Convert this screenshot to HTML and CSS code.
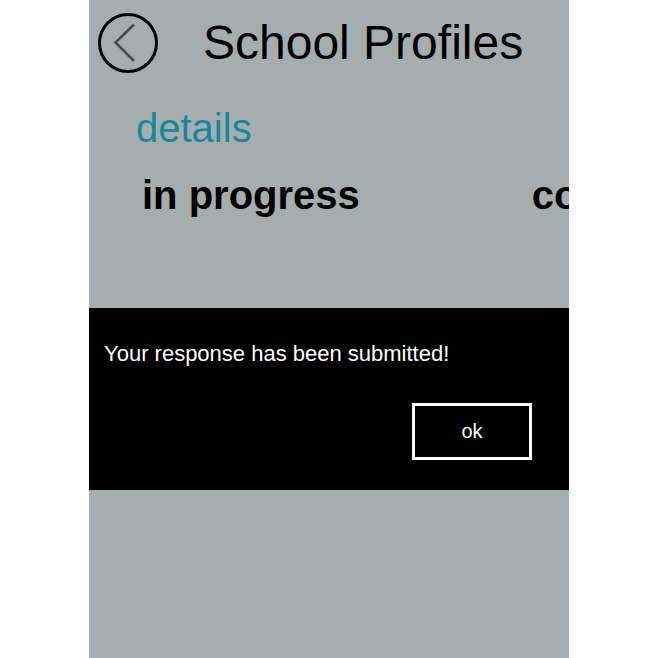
FILE: index.html
```html
<!DOCTYPE html>
<html lang="en">
<head>
  <meta charset="UTF-8">
  <meta name="viewport" content="width=device-width, initial-scale=1.0">
  <title>School Profiles</title>
  <link rel="stylesheet" href="styles.css">
</head>
<body>
  <div class="screen">
    <header class="top-bar">
      <button class="back-btn" aria-label="back">
        <svg viewBox="0 0 60 60" width="60" height="60">
          <circle cx="30" cy="30" r="28.5" fill="none" stroke="#000" stroke-width="3"/>
          <polyline points="36,11.5 17.5,29.5 36,48" fill="none" stroke="#4a4a4a" stroke-width="2.5"/>
        </svg>
      </button>
      <h1 class="page-title">School Profiles</h1>
    </header>

    <p class="section-link">details</p>

    <div class="tabs">
      <span class="tab">in progress</span>
      <span class="tab">completed</span>
    </div>

    <div class="dialog">
      <p class="dialog-msg">Your response has been submitted!</p>
      <div class="dialog-actions">
        <button class="ok-btn">ok</button>
      </div>
    </div>
  </div>
</body>
</html>
```

FILE: styles.css
```css
*, *::before, *::after { box-sizing: border-box; }
body { margin: 0; background-color: #fff; font-family: "Liberation Sans", Arial, sans-serif; color: #000; }

.screen { position: relative; width: 480px; height: 658px; margin-left: 89px; background-color: #a6adae; overflow: hidden; }

/* ヘッダー */
.top-bar { display: flex; align-items: center; padding: 13px 0 0 9px; }
.back-btn { width: 60px; height: 60px; padding: 0; border: 0; background: none; cursor: pointer; display: block; }
.back-btn svg { display: block; }
.page-title { margin: 0 0 0 45px; font-size: 48px; font-weight: normal; line-height: 48px; }

/* details */
.section-link { margin: 35px 0 0 47px; font-size: 40px; line-height: 40px; color: #16889a; }

/* タブ */
.tabs { display: flex; gap: 172px; margin: 27px 0 0 53px; white-space: nowrap; }
.tab { font-size: 40px; line-height: 40px; font-weight: bold; flex-shrink: 0; }

/* ダイアログ */
.dialog { position: absolute; left: 0; right: 0; top: 308px; height: 182px; background-color: #000; color: #fff; padding: 35px 37px 0 15px; }
.dialog-msg { margin: 0; font-size: 22px; line-height: 22px; }
.dialog-actions { display: flex; justify-content: flex-end; margin-top: 38px; }
.ok-btn { width: 120px; height: 57px; border: 3px solid #fff; background-color: #000; color: #fff; font-family: inherit; font-size: 20px; padding: 0; cursor: pointer; }
```
